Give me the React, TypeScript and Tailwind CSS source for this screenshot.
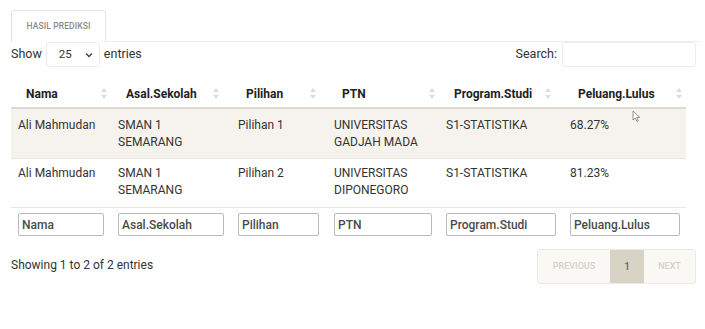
import React from "react";

const cols = [
  { name: "Nama", w: "w-[100px]", icon: "left-[90px]", input: "w-[86px]" },
  { name: "Asal.Sekolah", w: "w-[120px]", icon: "left-[102px]", input: "w-[106px]" },
  { name: "Pilihan", w: "w-[96px]", icon: "left-[79px]", input: "w-[81px]" },
  { name: "PTN", w: "w-[112px]", icon: "left-[102px]", input: "w-[98px]" },
  { name: "Program.Studi", w: "w-[124px]", icon: "left-[106px]", input: "w-[110px]" },
  { name: "Peluang.Lulus", w: "w-[123px]", icon: "left-[113px]", input: "w-[110px]" },
];

const rows = [
  ["Ali Mahmudan", "SMAN 1 SEMARANG", "Pilihan 1", "UNIVERSITAS GADJAH MADA", "S1-STATISTIKA", "68.27%"],
  ["Ali Mahmudan", "SMAN 1 SEMARANG", "Pilihan 2", "UNIVERSITAS DIPONEGORO", "S1-STATISTIKA", "81.23%"],
];

function SortIcon() {
  return (
    <svg width="6" height="11" viewBox="0 0 6 11" className="block">
      <path d="M3 0 L6 4 L0 4 Z" fill="#dcdcdc" />
      <path d="M3 11 L6 7 L0 7 Z" fill="#dcdcdc" />
    </svg>
  );
}

export default function App() {
  return (
    <div className="w-[705px] h-[329px] bg-white text-[12px] text-[#333] font-['Roboto',sans-serif] relative overflow-hidden">
      {/* tabs */}
      <div className="flex pt-[10px] pl-[11px] pr-[5px]">
        <div className="w-[95px] h-[32px] border border-b-0 border-[#e3e3e3] rounded-t-[4px] flex items-center justify-center text-[8.5px] font-medium text-[#8a8a8a] tracking-[0.1px]">
          HASIL PREDIKSI
        </div>
        <div className="flex-1 border-b border-[#ececec]" />
      </div>

      {/* controls */}
      <div className="flex items-center justify-between pl-[11px] pr-[9px] h-[25px]">
        <div className="flex items-center">
          <span className="text-[12.5px] text-[#333]">Show</span>
          <div className="ml-[4px] w-[54px] h-[25px] border border-[#ececec] rounded-[3px] flex items-center justify-between pl-[12px] pr-[6px]">
            <span className="text-[11.5px]">25</span>
            <svg width="8" height="6" viewBox="0 0 8 6">
              <path d="M1 1.5 L4 4.5 L7 1.5" stroke="#444" strokeWidth="1.4" fill="none" />
            </svg>
          </div>
          <span className="ml-[4px] text-[12.5px]">entries</span>
        </div>
        <div className="flex items-center">
          <span className="text-[12.5px]">Search:</span>
          <div className="ml-[5px] w-[134px] h-[25px] border border-[#ececec] rounded-[3px]" />
        </div>
      </div>

      {/* table */}
      <table className="ml-[11px] mt-[13px] w-[675px] table-fixed border-collapse">
        <colgroup>
          {cols.map((c) => (
            <col key={c.name} className={c.w} />
          ))}
        </colgroup>
        <thead>
          <tr className="h-[28px] border-b-2 border-[#dedad2]">
            {cols.map((c) => (
              <th key={c.name} className="relative text-left pl-[15px] font-bold text-[12px] text-[#222] align-middle">
                {c.name}
                <span className={`absolute top-[8px] ${c.icon}`}>
                  <SortIcon />
                </span>
              </th>
            ))}
          </tr>
        </thead>
        <tbody>
          {rows.map((r, i) => (
            <tr
              key={i}
              className={`${i === 0 ? "bg-[#f6f3ee] h-[50px]" : "bg-white h-[49px]"} border-b border-[#ebe7e0]`}
            >
              {r.map((cell, j) => (
                <td
                  key={j}
                  className={`align-top pl-[7px] pr-[8px] ${i === 0 ? "pt-[8px]" : "pt-[6px]"} leading-[17px] text-[12px] text-[#333]`}
                >
                  {cell}
                </td>
              ))}
            </tr>
          ))}
        </tbody>
        <tfoot>
          <tr className="h-[35px]">
            {cols.map((c) => (
              <td key={c.name} className="pl-[7px] align-middle">
                <div
                  className={`${c.input} h-[23px] border border-[#b9b9b9] rounded-[2px] flex items-center pl-[3px] text-[12px] text-[#4a4a4a] font-medium`}
                >
                  {c.name}
                </div>
              </td>
            ))}
          </tr>
        </tfoot>
      </table>

      {/* footer */}
      <div className="flex justify-between items-start pl-[11px] pr-[9px] mt-[7px]">
        <span className="mt-[7px] text-[12px] text-[#333]">Showing 1 to 2 of 2 entries</span>
        <div className="flex h-[35px] border border-[#ece9e3] rounded-[3px] bg-[#faf8f4] text-[9px] font-medium">
          <div className="w-[72px] flex items-center justify-center text-[#d4d0c8]">PREVIOUS</div>
          <div className="w-[34px] flex items-center justify-center bg-[#d9d3c6] text-[#666] text-[10px]">1</div>
          <div className="w-[51px] flex items-center justify-center text-[#d4d0c8]">NEXT</div>
        </div>
      </div>

      {/* mouse cursor */}
      <svg className="absolute left-[632px] top-[110px]" width="9" height="13" viewBox="0 0 9 13">
        <path d="M1 1 L1 10 L3.3 8 L5 11.5 L6.3 10.9 L4.7 7.5 L7.8 7.4 Z" fill="#fff" stroke="#777" strokeWidth="0.8" />
      </svg>
    </div>
  );
}
